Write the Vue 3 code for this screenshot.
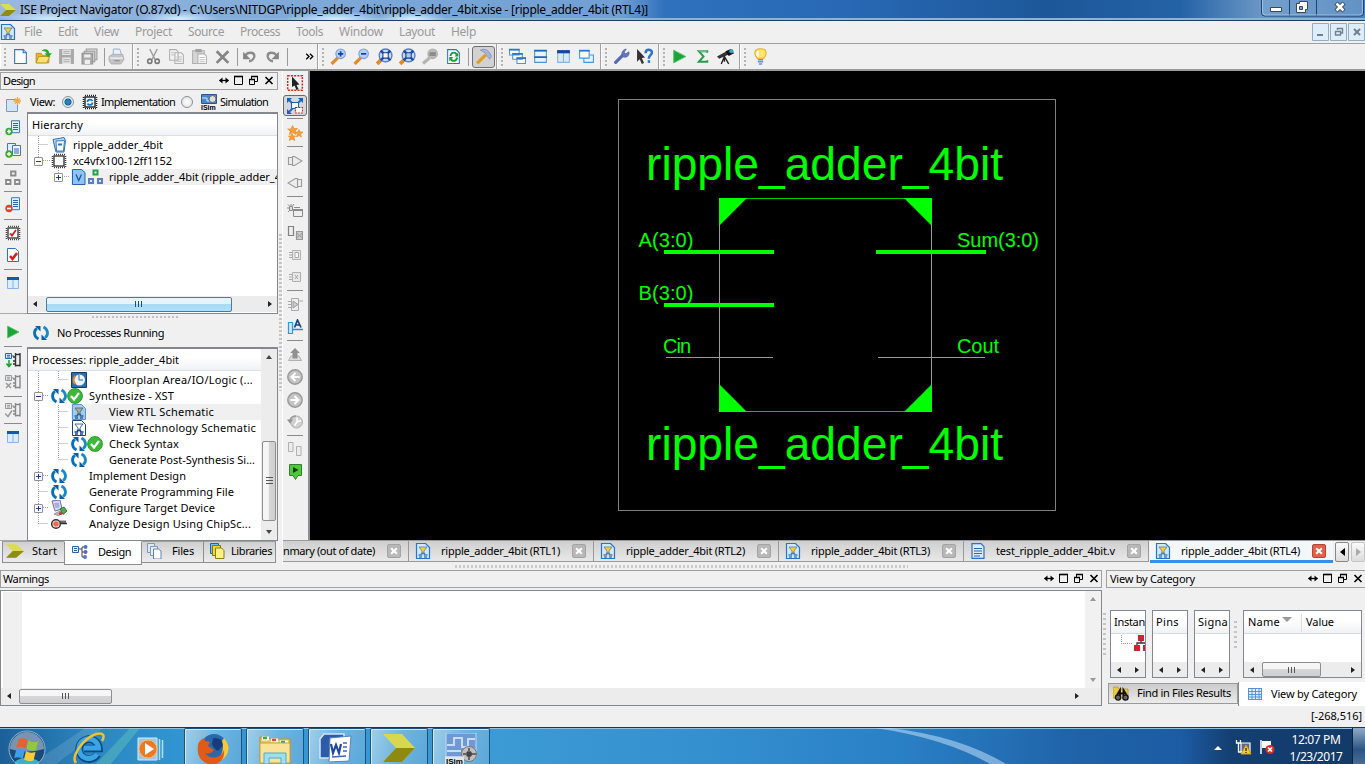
<script setup>
import { h } from 'vue'

// Sets tracking so a label occupies the given width in pixels
const vFit = {
  mounted(el, b) {
    if (!b.value) return
    const w = el.getBoundingClientRect().width
    el.style.letterSpacing = (b.value - w) / el.textContent.length + 'px'
  }
}

const page = '<path d="M2.5 1.5h8l3 3v10h-11z" fill="#fff" stroke="#2f6fc4"/>'
const cycle = '<path d="M5.500 14C.5 11.500 .5 5.500 4 3.500" fill="none" stroke="#0a6fb4" stroke-width="2.800"/><path d="M2 1h5.500v5.500z" fill="#0a5fa4"/><path d="M10.500 2C15.500 4.500 15.500 10.500 12 12.500" fill="none" stroke="#1a88c8" stroke-width="2.800"/><path d="M14 15H8.500V9.500z" fill="#0a5fa4"/>'
const lens = (inner) => `<path d="M1.500 15l6-6" stroke="#e08a28" stroke-width="3"/><circle cx="10" cy="5.500" r="4.500" fill="#b4d0f8" stroke="#7a9ee0"/>${inner}`
const fitLens = (inner) => `<path d="M1 15l4-4" stroke="#e08a28" stroke-width="3.500"/><circle cx="9" cy="7" r="6" fill="#c4dcfa" stroke="#5a7cc8" stroke-width="1.300"/>${inner}`
const chip = (c, f = '#fff') => `<rect x="3" y="3" width="10" height="10" fill="${f}" stroke="${c}" stroke-width="1.400"/><path d="M3 1.500h11M3 14.500h11M1.500 3v11M14.500 3v11" stroke="${c}" stroke-width="1.600" stroke-dasharray="1 1"/>`
const hourglass = (a, b) => `<path d="M4 4h8L9 8v2H7V8z" fill="${a}" stroke="${b}" stroke-width=".8"/><path d="M3.500 12h3v-1.500h3V12h3M4 14h3M9 14h3" fill="none" stroke="${b}" stroke-width="1.300"/>`
const nodeChip = (c, d) => `<path d="M.5 1.500h6v5h-6z" fill="#dde8f4" stroke="${c}"/><path d="M2 3.300h3M2 5h3M6.500 4H9" stroke="${c}"/><path d="M10.500 1v13.500M15 1v13.500M10.500 2.500H15M10.500 13.500H15" stroke="${d}" stroke-width="1.400"/><path d="M8 5h2M8 9h2M8 12h2" stroke="${d}" stroke-width="1.300"/>`
const docLines = '<path d="M6.500 .7h8v12h-8z" fill="#e4eefa" stroke="#3a78c8"/><path d="M8 3.500h5M8 5.500h5M8 7.500h5M8 9.500h5" stroke="#2a62b4"/>'

const art = {
  app: '<path d="M0 2h9l7 6-7 6H0l6-6z" fill="#dcdc50"/><path d="M6 8h10l-7 6H0z" fill="#8f8c14"/>',
  newf: page + '<path d="M10.500 1.500v3h3" fill="#a9d0f6" stroke="#2f6fc4"/>',
  open: '<path d="M1 5h5l1 2h6v7H1z" fill="#e8b62c" stroke="#b88410" stroke-width=".7"/><path d="M3.500 8H14l-3 6H1z" fill="#ffe070" stroke="#b88410" stroke-width=".7"/><path d="M6 3c3-3 7-2 7.500 2H16l-3.500 4L9 5h2C10.500 3.500 9 2.500 6 3z" fill="#28ac30"/>',
  save: '<path d="M1 1h14v14H1z" fill="#a8a8a8"/><path d="M4 1.500h8v5H4zM4 9h8v6H4z" fill="#e8e8e8"/><path d="M5 3h6M5 5h6M5 11h6M5 13h6" stroke="#a8a8a8"/>',
  saveall: '<path d="M5 1h10v10H5z" fill="#ddd" stroke="#999"/><path d="M3 3h10v10H3z" fill="#ddd" stroke="#999"/><path d="M1 5h10v10H1z" fill="#aaa" stroke="#909090"/><path d="M3 6h6v3H3zM3.500 11h5v4h-5z" fill="#eee"/>',
  print: '<path d="M5 7L5 1h6l2 6z" fill="#e8f2fc" stroke="#90a4bc" stroke-width=".8"/><path d="M1 8l3-2h10l1 5-3 4H3L1 12z" fill="#c4c4c8" stroke="#aaa" stroke-width=".8"/><path d="M2 9.500h12" stroke="#fff"/><path d="M6 12h5" stroke="#888"/>',
  cut: '<path d="M4.500 1l5 10M11.500 1l-5 10" stroke="#999" stroke-width="1.300"/><circle cx="4.500" cy="12.500" r="2" fill="none" stroke="#777" stroke-width="1.500"/><circle cx="11.500" cy="12.500" r="2" fill="none" stroke="#777" stroke-width="1.500"/>',
  copy: '<path d="M1.500 1.500h6l2 2v8h-8zM6.500 4.500h6l2 2v8h-8z" fill="#f2f2f2" stroke="#b0b0b0"/><path d="M8 8.500h5M8 10.500h5M8 12.500h5M3 4.500h3M3 6.500h3" stroke="#c0c0c0"/>',
  paste: '<path d="M1.500 2.500h11v12h-11z" fill="#d5d5d5" stroke="#b0b0b0"/><path d="M4 1h6v3H4z" fill="#a0a0a0"/><path d="M6.500 5.500h6l2 2v7h-8z" fill="#f8f8f8" stroke="#b0b0b0"/><path d="M8 9h5M8 11h5M8 13h5" stroke="#c4c4c4"/>',
  del: '<path d="M2.500 3l11 11M13.500 3l-11 11" stroke="#858585" stroke-width="2.600"/>',
  undo: '<path d="M4 7c3-4 9-3 8.500 1-.5 3-3 4.500-5 4.500" fill="none" stroke="#8b8b8b" stroke-width="2.200"/><path d="M2 3.500v7h7z" fill="#858585"/>',
  redo: '<path d="M12 7c-3-4-9-3-8.500 1 .5 3 3 4.500 5 4.500" fill="none" stroke="#8b8b8b" stroke-width="2.200"/><path d="M14 3.500v7H7z" fill="#858585"/>',
  more: '<path d="M4.500 5l3 3-3 3M8.500 5l3 3-3 3" fill="none" stroke="#000" stroke-width="1.400"/>',
  zin: lens('<path d="M7.500 5.500h5M10 3v5" stroke="#1c3ca0" stroke-width="1.500"/>'),
  zout: lens('<path d="M7.500 5.500h5" stroke="#1c3ca0" stroke-width="1.600"/>'),
  zfit: fitLens('<path d="M4.500 2.500l9 9M13.500 2.500l-9 9" stroke="#1c4aa8" stroke-width="2.200"/><path d="M6.500 4.500h5v5h-5z" fill="#fff" stroke="#1c3c90"/>'),
  zbox: fitLens('<path d="M4.500 2.500l9 9M13.500 2.500l-9 9" stroke="#1c4aa8" stroke-width="2.200"/><path d="M6.500 4.500h5v5h-5z" fill="#a8ccf4" stroke="#1c3c90"/>'),
  zgray: '<path d="M1 14.500l6-5" stroke="#b4b4b4" stroke-width="3"/><circle cx="10" cy="5.500" r="4.500" fill="#bbb" stroke="#b0b0b0"/><path d="M7 4h6v3.500H7z" fill="#8a8a8a"/>',
  refresh: page + '<path d="M5 7.500c1-4 5-4 6-1M11.500 9c-1 4-5 4-6 1" fill="none" stroke="#1ea030" stroke-width="1.800"/><path d="M12.500 4v4H9zM4 12.500v-4h4z" fill="#1ea030"/>',
  hammer: '<path d="M2 14.500L10 6.500" stroke="#e0a01c" stroke-width="3"/><path d="M5 2c5-2 7.500 0 10.500 5.500l-1.500 3-2.500-2.500-2-3.500C8 3.500 7 3 5 2z" fill="#a8b4dc" stroke="#8088b8" stroke-width=".7"/>',
  cascade: '<g fill="#fff" stroke="#4a94d8"><path d="M.5 1.500h9v5h-9zM3.500 5.500h9v5h-9zM7.500 9.500h8v5h-8z"/></g><path d="M0 1.500h10M3 5.500h10M7 9.500h9" stroke="#2a78cc" stroke-width="1.500"/>',
  tileh: '<path d="M2.500 2.500h11v11h-11z" fill="#e8f2fc" stroke="#4a94d8"/><path d="M2 2.500h12M2 8.500h12" stroke="#1868c0" stroke-width="1.600"/>',
  tilev: '<path d="M2.500 2.500h11v11h-11zM8 3v10" fill="#d7e8fa" stroke="#8ab4e0"/><path d="M2 3.500h12" stroke="#104898" stroke-width="3"/>',
  layers: '<path d="M5.500 6.500h9v7h-9z" fill="#e6f0fb" stroke="#4a94d8"/><path d="M1.500 2.500h9v7h-9z" fill="#f4f9ff" stroke="#4a94d8"/><path d="M1 2.500h10" stroke="#2a78cc" stroke-width="1.600"/>',
  wrench: '<path d="M2.500 13.500l7-7" stroke="#5868b8" stroke-width="3" stroke-linecap="round"/><path d="M12.500 1l-2 3 1.500 1.500 3-2c1 4-3 6.500-6 4.500-2-3 .5-7 3.500-7z" fill="#6474bc" stroke="#5060a8" stroke-width=".6"/>',
  help: '<path d="M1 1l7.500 8-3 .5 2 4.500-2 1-2-4.500L1 13z" fill="#333"/><path d="M9 5c0-4.500 6-4 6-1 0 3-3 2.500-3 6" fill="none" stroke="#2a72cc" stroke-width="2.300"/><path d="M11 11.500h2.300v2.500H11z" fill="#2a72cc"/>',
  play: '<path d="M2.500 2L14 8 2.500 14z" fill="#19a637" stroke="#5cc06c" stroke-width=".8"/>',
  sigma: '<path d="M12.500 4.500V3h-8L9 8l-4.500 5h8v-1.500" fill="none" stroke="#2a9a4c" stroke-width="1.800"/><path d="M5 3h7" stroke="#a0e0b0" stroke-width=".7"/>',
  scope: '<path d="M0 8l9-5 2 3-9 4z" fill="#333"/><path d="M8 3l5-2 3 4-5 2.500z" fill="#111"/><circle cx="13.500" cy="3" r="2" fill="#38a4c8"/><path d="M7 8l-3 7M7 8l4 7M7 7v6" stroke="#222" stroke-width="1.300"/>',
  bulb: '<path d="M8 .7c7 0 6 6 3 9H5C2 6.500 1 .7 8 .7z" fill="#ffe468" stroke="#e0b020"/><path d="M6 3c-1.500 2-1 4 0 5" stroke="#fff" stroke-width="2" fill="none"/><path d="M5.500 11h5M5.500 13h5M6.500 15h3" stroke="#5898dc" stroke-width="1.500"/>',
  newsrc: '<path d="M1.500 2.500h11v12h-11z" fill="#d3e6f8" stroke="#6c9cd0"/><path d="M12.500 0v8M8.500 4h8M10 1.500l5 5M15 1.500l-5 5" stroke="#f0a848" stroke-width="1.300"/>',
  addsrc: docLines + '<circle cx="4" cy="11.500" r="3.700" fill="#39a93c"/><path d="M4 9.500v4M2 11.500h4" stroke="#fff" stroke-width="1.400"/>',
  addcopy: '<path d="M2.500 1.500h8v9h-8z" fill="#e4eefa" stroke="#3a78c8"/><path d="M7.500 3.500h8v10h-8z" fill="#f4f8fe" stroke="#3a78c8"/><path d="M9 7h5M9 9h5M9 11h5" stroke="#2a62b4"/><circle cx="4" cy="12" r="3.700" fill="#39a93c"/><path d="M4 10v4M2 12h4" stroke="#fff" stroke-width="1.400"/>',
  modsg: '<g fill="#f4f4f4" stroke="#8a8a8a" stroke-width="1.800"><path d="M6 1.500h4.500v4H6zM1 10h4.500v4H1zM10 10h4.500v4H10z"/></g>',
  rmsrc: docLines + '<circle cx="4" cy="11.500" r="3.700" fill="#e04428"/><path d="M2 11.500h4" stroke="#fff" stroke-width="1.600"/>',
  chipchk: chip('#444') + '<path d="M5 8.500l2 2 4-5.500" stroke="#e02020" stroke-width="1.800" fill="none"/>',
  pagechk: page + '<path d="M5 9l2.500 3L12 6" stroke="#e01818" stroke-width="2.500" fill="none"/>',
  cols: '<path d="M2.500 2.500h11v11h-11zM8 3v10" fill="#dcecfa" stroke="#86b4e4"/><path d="M2 3.500h12" stroke="#1058b0" stroke-width="3"/>',
  nodes: nodeChip('#2a62b4', '#333') + '<path d="M4 8v6M1.500 11.500L4 14.500l2.500-3" stroke="#18a030" stroke-width="1.500" fill="none"/>',
  nodesx: nodeChip('#999', '#888') + '<path d="M1 9l5 5M6 9l-5 5" stroke="#999" stroke-width="1.500"/>',
  nodesc: nodeChip('#999', '#888') + '<path d="M0 11.500l3 3 4-6" stroke="#999" stroke-width="1.500" fill="none"/>',
  impl: chip('#222') + '<path d="M5.500 8c0-3 4-3 5-1M10.500 8.500c0 3-4 3-5 1" stroke="#1478c8" stroke-width="1.800" fill="none"/>',
  proj: '<path d="M2 2.500l11-2 1.500 3L13 15H5z" fill="#b7d8f4" stroke="#2c6cae"/><path d="M5 4l8.500-.5L12.500 14H5.500z" fill="#f3f9ff" stroke="#3c7cc0"/><path d="M7 6.500h4v2H7z" fill="#2c74c8"/>',
  chip: chip('#3c3c3c'),
  vfile: '<path d="M1.500 .5h9l3.500 3v12H1.500z" fill="#8fc3f2" stroke="#2464b0"/><path d="M5 5.500l2.700 6 2.700-6" fill="none" stroke="#1b4f9c" stroke-width="1.200"/>',
  mods: '<path d="M6.500 1.500h4v4h-4z" fill="#d8f4e0" stroke="#25a050" stroke-width="2"/><g fill="#e0e8fa" stroke="#5c7cc8" stroke-width="2"><path d="M2 10h4v4H2zM11 10h4v4h-4z"/></g>',
  cycle,
  ok: '<circle cx="8" cy="8" r="7.400" fill="#3cb93a" stroke="#2a9a2c"/><path d="M4 8l3 3.500L12 5" fill="none" stroke="#fff" stroke-width="2.200"/>',
  floor: '<path d="M.5 .5h15v15H.5z" fill="#2c6cb4" stroke="#123c70"/><circle cx="8.500" cy="8" r="5.500" fill="#eaf4fc"/><path d="M8 3v5h4" stroke="#2c6cb4" fill="none"/><path d="M4.500 12a5 5 0 0 1 0-8" stroke="#e88a1c" stroke-width="2" fill="none"/>',
  rtl: '<path d="M1.500 .5h9l4 4v11h-13z" fill="#a4caf0" stroke="#5a94d0"/>' + hourglass('#b0ac80', '#37648c'),
  tech: '<path d="M1.500 .5h9l4 4v11h-13z" fill="#fff" stroke="#16458c"/>' + hourglass('#fff', '#16458c'),
  sch: '<path d="M1.500 .5h9l4 4v11h-13z" fill="#d3e7fb" stroke="#2a74c8" stroke-width="1.200"/>' + hourglass('#fcd024', '#5080b8'),
  config: '<path d="M1 1l8-1 2 9-7 2z" fill="#d8dcf0" stroke="#6c7098"/><path d="M3 3l5-.5.500 5-4 .5z" fill="#a8b0d8"/><path d="M3 14l6-3 2 3-4 1.500z" fill="#b8b8c8" stroke="#888" stroke-width=".8"/><path d="M9 9l4-2 3 4-4 3.500z" fill="#4cae50" stroke="#205c28" stroke-width=".8"/><circle cx="9.500" cy="13.500" r="1.600" fill="#d83030"/>',
  scopekey: '<path d="M8.500 7.500H16M10 4.500v3M12 4.500v3M14 4.500v3" stroke="#333" stroke-width="1.400"/><circle cx="5" cy="8" r="4.300" fill="#fff" stroke="#333" stroke-width="1.500"/><circle cx="5" cy="8" r="2.800" fill="#f0684c"/>',
  select: '<path d="M.7 .7h14.600v14.600H.7z" fill="none" stroke="#e02020" stroke-width="1.400" stroke-dasharray="2 1.200"/><path d="M5 1.500l7.500 8-3 .5 2 4-2 1-2-4.500L5 12z" fill="#222"/>',
  zoomfull: '<path d="M2 2l12 12M14 2L2 14" stroke="#2468b8" stroke-width="1.800"/><path d="M0 0h5L0 5zM16 0h-5l5 5zM0 16h5l-5-5z" fill="#1c60b4"/><path d="M4.500 4.500h7v6h-7z" fill="#fff" stroke="#1c60b4"/><path d="M8.500 9.500h7v5.500h-7z" fill="#fff" stroke="#e02020" stroke-width="1.200" stroke-dasharray="2 1"/>',
  stars: '<g fill="#f4a03c" stroke="#ee8c24" stroke-width=".7"><path d="M5.500 .5L7 3.500h3.500L8 6l1 3.500-3.500-2-3 2 .7-3.500-2.500-2H4z"/><path d="M12 4.500l1 2.500h3L13.500 9l1 3-2.500-1.500-2.500 1.500 1-3L8 7h3z"/><path d="M5 8.500l1 2.500h2.500L7 12.500l.7 3L5 14l-2.500 1.500.5-3L1.500 11H4z"/></g>',
  gateR: '<path d="M1.500 4.500h4v7h-4zM5.500 3.500h2L15 8l-7.500 4.500h-2z" fill="#ececec" stroke="#9a9a9a" stroke-width="1.100"/>',
  gateL: '<path d="M14.500 4.500h-4v7h4zM10.500 3.500h-2L1 8l7.500 4.500h2z" fill="#ececec" stroke="#9a9a9a" stroke-width="1.100"/>',
  win: '<path d="M6.500 6.500h9v7h-9z" fill="#eee" stroke="#8a8a8a"/><path d="M6 7h10" stroke="#8a8a8a" stroke-width="2"/><path d="M2.500 3.500h3v4h-3z" fill="#ddd" stroke="#8a8a8a"/><path d="M7 4.500h6M1 1.500l1.500 1.500M4 1v2M7 1L5.500 3M0 5h2M1 9l1.500-1.500" fill="none" stroke="#8a8a8a"/>',
  boxes: '<path d="M1.500 1.500h5v9h-5z" fill="#eee" stroke="#808080" stroke-width="1.200"/><path d="M9.500 6.500h6v8h-6z" fill="#ccc" stroke="#999" stroke-width="1.200"/><path d="M9.500 8l6 5M15.500 8l-6 5" stroke="#999"/>',
  chipg: '<path d="M5.500 3.500h8v9h-8z" fill="#e8e8e8" stroke="#b0b0b0"/><path d="M8 5.500h3.500v5H8zM2 5.500h3M2 8h3M2 10.500h3" fill="#fff" stroke="#a8a8a8"/>',
  chipg2: '<path d="M5.500 3.500h8v9h-8z" fill="#e8e8e8" stroke="#b0b0b0"/><path d="M8 6l3 4M11 6l-3 4M2 5.500h3M2 8h3M2 10.500h3" stroke="#a8a8a8"/>',
  amp: '<path d="M4.500 1.500h7v12h-7zM1 4.500h3M1 7.500h3M1 10.500h3M12 4h4" fill="#eee" stroke="#a8a8a8"/><path d="M6 4l5 3.500L6 11z" fill="#ccc" stroke="#999"/>',
  attr: '<path d="M1.500 3.500h4v11h-4z" fill="#d4e8fc" stroke="#2a98e8" stroke-width="1.200"/><path d="M5 10.500h11" stroke="#2a88d8" stroke-width="1.500"/><path d="M7.500 8.500L10.500 1l3.500 7.500M8.500 6h4" fill="none" stroke="#20408c" stroke-width="1.700"/>',
  upg: '<path d="M1.500 13.500L4 9h8l2.500 4.500z" fill="#ddd" stroke="#b0b0b0"/><path d="M5.500 11.500V6H3l5-5 5 5h-2.500v5.500z" fill="#909090"/>',
  back: '<circle cx="8" cy="8" r="7.200" fill="#c4c4c4" stroke="#989898" stroke-width="1.400"/><path d="M8.500 4L4.500 8l4 4M5 8h7.500" fill="none" stroke="#fff" stroke-width="2"/>',
  fwd: '<circle cx="8" cy="8" r="7.200" fill="#c4c4c4" stroke="#989898" stroke-width="1.400"/><path d="M7.500 4l4 4-4 4M11 8H3.500" fill="none" stroke="#fff" stroke-width="2"/>',
  clock: '<circle cx="9.500" cy="8" r="6" fill="#d0d0d0" stroke="#b0b0b0"/><path d="M10 3.500V8l4-1.500M7.500 11.500L10 8" stroke="#fff" stroke-width="1.500" fill="none"/><path d="M0 5.500h6L3 9.500z" fill="#909090"/><path d="M3 6c1-3 4-4 6-4" fill="none" stroke="#999" stroke-width="1.500"/>',
  pair: '<path d="M1.500 1.500H6v9H1.500zM9.500 5.500H14v9H9.500z" fill="#ececec" stroke="#b0b0b0"/>',
  gflag: '<path d="M2.500 .5h12v11h-3.500l-2.500 4-2.500-4h-3.500z" fill="#4cc83a" stroke="#3a7c34"/><path d="M6 3l5.500 3L6 9z" fill="#163c12"/>',
  designt: '<path d="M.5 2.500h6v6h-6z" fill="#e4eefa" stroke="#2a62b4"/><path d="M2 4.500h3M2 6.500h3" stroke="#2a62b4"/><path d="M7 5h3M10 3v10M10 3h2M10 8h2M10 13h2" stroke="#444" fill="none"/><circle cx="13.500" cy="3" r="2" fill="#3a78c8"/><circle cx="13.500" cy="8" r="2" fill="#6c5cb8"/><circle cx="13" cy="13" r="2" fill="#5c78c8"/>',
  filest: '<path d="M1.500 .5h7v9h-7z" fill="#dce8f6" stroke="#7c98c0"/><path d="M4.500 3.500h7v9h-7z" fill="#e8f0fa" stroke="#7c98c0"/><path d="M7.500 6h5l2.500 2v8H7.500z" fill="#fff" stroke="#6484b0"/>',
  libst: '<path d="M1.500 .5h8v10h-8z" fill="#78c0ec" stroke="#1868a8"/><path d="M3.500 2.500h8v10h-8z" fill="#f8d820" stroke="#7c7420"/><path d="M6.500 5h6l2.500 2.500v8H6.500z" fill="#fff080" stroke="#8c7c10"/>',
  doc: '<path d="M2 .7h9l3 3v11.600H2z" fill="#dceafa" stroke="#2c70c4" stroke-width="1.200"/><path d="M4 5.500h8M4 8h8M4 10.500h8M4 13h6" stroke="#2868c0" stroke-width="1.200"/>',
  find: '<path d="M0 2h5l1 2h9v9H0z" fill="#ecc83c" stroke="#b89428" stroke-width=".8"/><circle cx="5" cy="12.500" r="2.600" fill="#666" stroke="#111" stroke-width="1.300"/><circle cx="12.500" cy="12.500" r="2.600" fill="#666" stroke="#111" stroke-width="1.300"/><path d="M4 10l3-5v6M13.500 10l-3-5v6M7 8.500h3.500" stroke="#111" stroke-width="1.800" fill="none"/>',
  grid: '<path d="M1 2h14v12H1z" fill="#e6f0fc"/><path d="M1 2.500h14M1 5.500h14M1 8.500h14M1 11h14M1 13.500h14M1.500 2v12M5 2v12M8.500 2v12M12 2v12M14.500 2v12" stroke="#5c90d4"/>',
  inst: '<path d="M4 0h6v6H4zM0 10h6v6H0zM9 10h6v6H9z" fill="#d42030"/><path d="M7 5.500V8M3 10V8h9v2" fill="none" stroke="#333" stroke-width="1.300"/>'
}

const Ico = (p) => h('svg', { width: p.s || 16, height: p.s || 16, viewBox: '0 0 16 16', class: 'ico', innerHTML: art[p.n] })
Ico.props = ['n', 's']

const Dock = () => h('svg', {
  width: 58, height: 13, viewBox: '0 0 58 13', class: 'dock',
  innerHTML: '<path d="M1.500 6.500h9" stroke="#000" stroke-width="1.300"/><path d="M4.500 3.500v6l-3.500-3zM7.500 3.500v6l3.500-3z"/><path d="M16.500 2.500h8v8h-8z" fill="none" stroke="#000"/><path d="M16 2.500h9" stroke="#000" stroke-width="1.600"/><path d="M33.500 5V2.500h6v5H37M31.500 5.500h5v5h-5z" fill="none" stroke="#000" stroke-width="1"/><path d="M33 2.500h7M31 5.500h6" stroke="#000" stroke-width="1.600"/><path d="M47.500 3l7 7M54.500 3l-7 7" stroke="#000" stroke-width="1.600"/>'
})

const menus = [['File', 18], ['Edit', 20], ['View', 25], ['Project', 37], ['Source', 36], ['Process', 40], ['Tools', 27], ['Window', 44], ['Layout', 36], ['Help', 25]]
const groups = [
  { k: 'g1', i: ['newf', 'open', 'save', 'saveall', '|', 'print'] },
  { k: 'g2', i: ['cut', 'copy', 'paste', 'del', '|', 'undo', 'redo', '|', ' ', 'more'] },
  { k: 'g3', i: ['zin', 'zout', 'zfit', 'zbox', 'zgray', 'refresh', '|', 'hammer'] },
  { k: 'g4', i: ['cascade', 'tileh', 'tilev', 'layers'] },
  { k: 'g5', i: ['wrench', 'help'] },
  { k: 'g6', i: ['play', 'sigma', 'scope'] },
  { k: 'g7', i: ['bulb'] }
]
const left1 = ['newsrc', 'addsrc', 'addcopy', '|', 'modsg', '|', 'rmsrc', '|', 'chipchk', 'pagechk', '|', 'cols']
const left2 = ['play', '|', 'nodes', 'nodesx', '|', 'nodesc', '|', 'cols']
const rtb = ['select', 'zoomfull', '|', 'stars', '|', 'gateR', 'gateL', '|', 'win', 'boxes', 'chipg', 'chipg2', '|', 'amp', 'attr', '|', 'upg', 'back', 'fwd', 'clock', '|', 'pair', 'gflag']
const hier = [
  { i: ['proj'], t: 'ripple_adder_4bit', w: 90 },
  { e: '-', i: ['chip'], t: 'xc4vfx100-12ff1152', w: 99 },
  { e: '+', l: 1, wide: 1, hl: 1, i: ['vfile', 'mods'], t: 'ripple_adder_4bit (ripple_adder_4', w: 172 }
]
const procs = [
  { l: 1, i: ['floor'], t: 'Floorplan Area/IO/Logic (...', w: 144 },
  { e: '-', i: ['cycle', 'ok'], t: 'Synthesize - XST', w: 85 },
  { l: 1, hl: 1, i: ['rtl'], t: 'View RTL Schematic', w: 105 },
  { l: 1, i: ['tech'], t: 'View Technology Schematic', w: 147 },
  { l: 1, i: ['cycle', 'ok'], t: 'Check Syntax', w: 70 },
  { l: 1, i: ['cycle'], t: 'Generate Post-Synthesis Si...', w: 146 },
  { e: '+', i: ['cycle'], t: 'Implement Design', w: 97 },
  { i: ['cycle'], t: 'Generate Programming File', w: 145 },
  { e: '+', i: ['config'], t: 'Configure Target Device', w: 126 },
  { i: ['scopekey'], t: 'Analyze Design Using ChipSc...', w: 162 }
]
const docs = [
  { i: 'sch', t: 'ripple_adder_4bit (RTL1)', w: 119 },
  { i: 'sch', t: 'ripple_adder_4bit (RTL2)', w: 119 },
  { i: 'sch', t: 'ripple_adder_4bit (RTL3)', w: 119 },
  { i: 'doc', t: 'test_ripple_adder_4bit.v', w: 119 },
  { i: 'sch', t: 'ripple_adder_4bit (RTL4)', w: 119, on: 1 }
]
const lists = [['Instan', 31, 1], ['Pins', 23, 0], ['Signa', 30, 0]]
</script>

<template>
  <div class="screen">
    <header class="title">
      <Ico n="app" class="applogo" /><span v-fit="628">ISE Project Navigator (O.87xd) - C:\Users\NITDGP\ripple_adder_4bit\ripple_adder_4bit.xise - [ripple_adder_4bit (RTL4)]</span>
      <svg class="winbtns" width="103" height="17" viewBox="0 0 103 17">
        <path d="M.5 0v13q0 3 3 3h96q3 0 3-3V0M28.500 0v16M55.500 0v16" fill="#7fa9d4" fill-opacity=".45" stroke="#1e4474" />
        <path d="M1.500 0v12q0 3 3 3h94q3 0 3-3V0" fill="none" stroke="#b6d0ea" stroke-opacity=".7" />
        <path d="M9.500 7.500h11v4h-11z" fill="#fff" stroke="#39485a" />
        <path d="M38.500 1.500h8v8h-2v3h-9v-9h3z" fill="#fff" stroke="#39485a" /><path d="M38.500 6.500h3v3h-3z" fill="#7fa9d4" stroke="#39485a" />
        <path d="M75 3l8 8M83 3l-8 8" stroke="#39485a" stroke-width="4.500" /><path d="M75.500 3.500l7 7M82.500 3.500l-7 7" stroke="#fff" stroke-width="2.500" />
      </svg>
    </header>

    <nav class="menu">
      <Ico n="sch" class="mlogo" />
      <span v-for="m in menus" :key="m[0]" v-fit="m[1]">{{ m[0] }}</span>
      <svg class="mdi" width="53" height="19" viewBox="0 0 53 19">
        <path d="M.5 .5h16v17H.5zM18.500 .5h16v17h-16zM36.500 .5h16v17h-16z" fill="#dfecf9" stroke="#92acc4" />
        <path d="M5 12h6" stroke="#70808e" stroke-width="2" />
        <path d="M25.500 7V5.500h5V10H29M23.500 8.500h5v3.500h-5z" fill="none" stroke="#70808e" stroke-width="1.400" />
        <path d="M42 6l6 6M48 6l-6 6" stroke="#70808e" stroke-width="2" />
      </svg>
    </nav>

    <div class="tools">
      <div v-for="g in groups" :key="g.k" class="tgroup" :class="g.k">
        <template v-for="(n, i) in g.i" :key="i">
          <i v-if="n === '|'" class="vsep"></i>
          <i v-else-if="n === ' '" class="gapx"></i>
          <span v-else class="slot" :class="{ pressed: n === 'hammer' }"><Ico :n="n" :s="n === 'more' ? 15 : 17" /></span>
        </template>
      </div>
    </div>

    <main class="work">
      <aside class="side">
        <div class="dockhead"><span v-fit="32">Design</span><Dock /></div>
        <div class="upper">
          <div class="vtool">
            <template v-for="(n, i) in left1" :key="i"><i v-if="n === '|'" class="hsep"></i><span v-else class="vslot"><Ico :n="n" /></span></template>
          </div>
          <div class="pane">
            <div class="viewrow">
              <span v-fit="25">View:</span><i class="radio on"></i><Ico n="impl" /><span v-fit="74" class="lab">Implementation</span><i class="radio r2"></i>
              <svg width="16" height="16" viewBox="0 0 16 16"><path d="M.5 .5h15v9H.5z" fill="#4888cc" stroke="#28589c" /><path d="M1 4h5v3h4V3h5" stroke="#d8ecff" fill="none" /><circle cx="11.500" cy="5" r="3.500" fill="#ddd" stroke="#666" /><text x="0" y="15.500" class="isim">ISim</text></svg>
              <span v-fit="48" class="lab">Simulation</span>
            </div>
            <div class="box hbox">
              <div class="colhead"><span v-fit="51">Hierarchy</span></div>
              <div class="tree">
                <svg class="lines" width="60" height="60" viewBox="0 0 60 60"><path d="M10.500 0v24M10.500 8.500h10M15 24.500h7M30.500 32v8M36 40.500h6" /></svg>
                <div v-for="r in hier" :key="r.t" class="row" :class="{ deep: r.l }">
                  <i class="exp" :class="{ none: !r.e, plus: r.e === '+' }"></i>
                  <div class="fill" :class="{ hl: r.hl }"><div class="icons" :class="{ slim: !r.wide }"><Ico v-for="n in r.i" :key="n" :n="n" /></div><span v-fit="r.w">{{ r.t }}</span></div>
                </div>
              </div>
              <div class="hscroll"><b class="al"></b><i class="thumb blue"></i><b class="ar"></b></div>
            </div>
          </div>
        </div>
        <div class="splith"><i></i></div>
        <div class="lower">
          <div class="vtool">
            <template v-for="(n, i) in left2" :key="i"><i v-if="n === '|'" class="hsep"></i><span v-else class="vslot"><Ico :n="n" /></span></template>
          </div>
          <div class="pane">
            <div class="running"><Ico n="cycle" /><span v-fit="107">No Processes Running</span></div>
            <div class="box pbox">
              <div class="plist">
                <div class="colhead"><span v-fit="147">Processes: ripple_adder_4bit</span></div>
                <div class="tree">
                  <svg class="lines" width="60" height="162" viewBox="0 0 60 162"><path d="M10.500 0v154M30.500 0v8M30.500 34v54M30.500 8.500h10M30.500 40.500h10M30.500 56.500h10M30.500 72.500h10M30.500 88.500h10M15 24.500h6M15 104.500h6M10.500 120.500h10M15 136.500h6M10.500 152.500h10" /></svg>
                  <div v-for="r in procs" :key="r.t" class="row" :class="{ deep: r.l }">
                    <i class="exp" :class="{ none: !r.e, plus: r.e === '+' }"></i>
                    <div class="fill" :class="{ hl: r.hl }"><div class="icons"><Ico v-for="n in r.i" :key="n" :n="n" /></div><span v-fit="r.w">{{ r.t }}</span></div>
                  </div>
                </div>
              </div>
              <div class="vscroll"><b class="au"></b><i class="vthumb"></i><b class="ad"></b></div>
            </div>
          </div>
        </div>
        <div class="sidetabs">
          <div class="st t1"><Ico n="app" :s="18" /><span v-fit="25">Start</span></div>
          <div class="st t2"><Ico n="designt" /><span v-fit="33">Design</span></div>
          <div class="st t3"><Ico n="filest" /><span v-fit="22">Files</span></div>
          <div class="st t4"><Ico n="libst" /><span v-fit="41">Libraries</span></div>
        </div>
      </aside>
      <div class="splitv"><i></i></div>

      <section class="center">
        <div class="editor">
          <div class="rtool">
            <template v-for="(n, i) in rtb" :key="i"><i v-if="n === '|'" class="hsep"></i><span v-else class="vslot" :class="{ pressed: n === 'zoomfull' }"><Ico :n="n" /></span></template>
          </div>
          <svg class="canvas" width="1055" height="469" viewBox="310 71 1055 469">
            <g fill="none" stroke="#808080" shape-rendering="crispEdges">
              <path d="M618.500 99.500h437v411h-437z" />
              <path d="M719.500 198v213M931.500 198v213" stroke="#9a9a9a" />
              <path d="M719 198.500h213M719 411.500h213" stroke="#00c800" />
              <path d="M666 357.500h107M878 357.500h107" stroke="#9a9a9a" />
            </g>
            <g fill="#0f0">
              <path d="M719 198h28l-28 28zM932 198h-28l28 28zM719 412h28l-28-28zM932 412h-28l28-28z" />
              <path d="M664 250h110v4H664zM664 303h110v4H664zM876 250h110v4H876z" />
              <text x="646" y="180" textLength="357" class="big">ripple_adder_4bit</text>
              <text x="646" y="460" textLength="357" class="big">ripple_adder_4bit</text>
              <text x="638.500" y="247" textLength="55">A(3:0)</text>
              <text x="638.500" y="300" textLength="55">B(3:0)</text>
              <text x="663" y="353" textLength="28">Cin</text>
              <text x="957" y="247" textLength="82">Sum(3:0)</text>
              <text x="957" y="353" textLength="42">Cout</text>
            </g>
          </svg>
        </div>
        <div class="doctabs">
          <div class="dt first"><span v-fit="92">nmary (out of date)</span><b class="x"></b></div>
          <div v-for="d in docs" :key="d.t" class="dt" :class="{ on: d.on }"><Ico :n="d.i" /><span v-fit="d.w">{{ d.t }}</span><b class="x"></b></div>
          <div class="tb"><b class="al"></b></div><div class="tb off"><b class="ar"></b></div>
        </div>
      </section>
    </main>

    <div class="splitb"><i></i></div>

    <section class="bottom">
      <div class="warn">
        <div class="dockhead"><span v-fit="46">Warnings</span><Dock /></div>
        <div class="wbox">
          <div class="wrow"><i class="strip"></i><div class="vscroll wv"><b class="au"></b><b class="ad"></b></div></div>
          <div class="hscroll"><b class="al"></b><i class="thumb"></i><b class="ar"></b></div>
        </div>
      </div>
      <div class="cat">
        <div class="dockhead"><span v-fit="85">View by Category</span><Dock /></div>
        <div class="lists">
          <i class="vdots"></i>
          <div v-for="l in lists" :key="l[0]" class="lb">
            <div class="lh"><span v-fit="l[1]">{{ l[0] }}</span></div>
            <div class="lbody" :class="{ branch: l[2] }"><Ico v-if="l[2]" n="inst" /></div>
            <div class="hscroll"><b class="al"></b><b class="ar"></b></div>
          </div>
          <i class="vdots d2"></i>
          <div class="lb wide">
            <div class="lh"><span v-fit="32">Name</span><b class="sort"></b><i class="vline"></i><span v-fit="28">Value</span></div>
            <div class="lbody"></div>
            <div class="hscroll"><b class="al"></b><i class="thumb"></i><b class="ar"></b></div>
          </div>
        </div>
        <div class="cattabs">
          <div class="ct"><Ico n="find" /><span v-fit="94">Find in Files Results</span></div>
          <div class="ct on"><Ico n="grid" /><span v-fit="86">View by Category</span></div>
        </div>
      </div>
    </section>

    <div class="status"><span v-fit="51">[-268,516]</span></div>

    <footer class="taskbar">
      <svg class="glow" width="1365" height="37" viewBox="0 0 1365 37">
        <path d="M30 37L85 0h18L55 37z" fill="#fff" opacity=".12" /><path d="M95 37L130 0h10l-30 37z" fill="#8ff0b0" opacity=".25" />
        <path d="M890 0Q960 8 1008 37h-16Q945 10 875 0z" fill="#cfeaff" opacity=".5" />
      </svg>
      <div class="launch l1"><svg width="38" height="37" viewBox="0 0 38 37">
        <circle cx="19" cy="20" r="18" fill="#1b4a76" stroke="#8fb8d8" /><path d="M2 20a17 17 0 0 1 34 0q-17 5-34 0z" fill="#c3d4e0" opacity=".55" /><ellipse cx="19" cy="34" rx="12" ry="5" fill="#48d8f8" opacity=".7" />
        <path d="M11 10q4-2 8.500 1l-2 8.500q-4-3-9-1z" fill="#e8602c" /><path d="M20.500 11.500q4 3 9.500 1l-2 8.500q-4 2-9.500-1z" fill="#94c83c" /><path d="M8.200 20.500q4-2 8.500 1l-2 8.500q-4-3-8.500-1z" fill="#3ca0e8" /><path d="M18 22q4 3 9.500 1l-2 8.500q-4 2-9.500-1z" fill="#f8cc38" />
      </svg></div>
      <div class="launch l2"><svg width="34" height="34" viewBox="0 0 34 34">
        <path d="M25.500 23.500a10 10 0 1 1 1.500-6H12" fill="none" stroke="#0a4a84" stroke-width="7.500" /><path d="M25 23a9.800 9.800 0 1 1 1.500-6H12" fill="none" stroke="#3aa4e4" stroke-width="5" /><path d="M4 32C-1 26 10 8 24 3c8-2 9 2 6 7" fill="none" stroke="#f0c030" stroke-width="2.500" />
      </svg></div>
      <div class="launch l3"><svg width="28" height="28" viewBox="0 0 28 28">
        <path d="M1 2h19v22H1z" fill="#9cc8e4" stroke="#d4ecf8" /><path d="M22.500 3v21M25.500 4v18" stroke="#b4e0f4" stroke-width="1.500" /><circle cx="11" cy="13" r="9" fill="#f07820" stroke="#fcb870" /><path d="M8 7l9 6-9 6z" fill="#fff" />
      </svg></div>
      <div class="task"><svg width="32" height="32" viewBox="0 0 32 32">
        <circle cx="17" cy="14" r="13" fill="#2a68ac" /><path d="M16 5q8-1 11 6l-6 7q-5-3-6-7z" fill="#173c7c" /><path d="M27 5q8 10 2 18-5 6-12 7 12-10 8-22z" fill="#f8c838" /><path d="M2 9l3-3q2-2 3 2l5 1-2 4 6 4q-4 5-9 3 5 6 12 4 5-2 7-7 1 9-6 13c-8 4-18-1-20-10Q0 13 2 9z" fill="#e05a18" />
      </svg></div>
      <div class="task"><svg width="34" height="32" viewBox="0 0 34 32">
        <path d="M2 4h8l2 2h20v24H2z" fill="#e9c55c" stroke="#b8902c" /><path d="M4 3.500h7v4H4zM13 5.500h7v4h-7zM22 7.500h8v3h-8z" fill="#fff" /><path d="M5 5h4" stroke="#30b040" stroke-width="2.500" /><path d="M14 7h4" stroke="#e04838" stroke-width="2.500" /><path d="M23 9h4" stroke="#2898e0" stroke-width="2.500" /><path d="M2 10h30v20H2z" fill="#fae396" stroke="#c8a040" /><path d="M6 31V20h22v11h-5v-6H11v6z" fill="#a2dcf2" stroke="#4cacd4" />
      </svg></div>
      <div class="task"><svg width="38" height="32" viewBox="0 0 38 32">
        <path d="M6 1h20v24H2V6z" fill="#2c5ca8" stroke="#d4e4fa" stroke-width="1.500" /><path d="M12 5l21-2-2 25-20 1z" fill="#fff" stroke="#5884c4" /><path d="M13 11l2 9 3-8 3 8 2-9" fill="none" stroke="#24489c" stroke-width="2.200" /><path d="M25 10h4M25 14h4M25 18h4M14 24l14-1" stroke="#3c68b4" stroke-width="1.500" />
      </svg></div>
      <div class="task"><svg width="32" height="32" viewBox="0 0 32 32"><path d="M0 1h19l13 14-13 14H0l13-14z" fill="#d8d850" /><path d="M13 15h19L19 29H0z" fill="#8e8a10" /></svg></div>
      <div class="task"><svg width="32" height="32" viewBox="0 0 32 32">
        <path d="M1 0h30v24H1z" fill="#7098d4" stroke="#c8d8f0" /><path d="M2 12h7V5h8v9h6V6h7M2 18h14" fill="none" stroke="#c8dcf8" stroke-width="2" /><circle cx="24" cy="21" r="7.500" fill="#c0c0c0" stroke="#777" /><circle cx="24" cy="21" r="3" fill="#444" /><path d="M24 15v4M24 24v3M18 21h4M27 21h4" stroke="#666" stroke-width="2" /><path d="M0 23.500h19v8H0z" fill="#dfe6ee" /><text x="1" y="31" class="isim2">ISim</text>
      </svg></div>
      <div class="tray">
        <b class="trayup"></b>
        <svg width="50" height="18" viewBox="0 0 50 18">
          <path d="M6 4h9v9H6z" fill="#667" stroke="#fff" stroke-width="1.200" /><path d="M1.500 1v3h4V1M3.500 4v9h3" stroke="#fff" fill="none" stroke-width="1.300" /><path d="M11 6l5 9H6z" fill="#f8d020" stroke="#c8a418" /><path d="M11 9v3M11 13v1" stroke="#222" stroke-width="1.300" />
          <path d="M26 1v14" stroke="#fff" stroke-width="1.500" /><path d="M27 2h9v7h-9z" fill="#fff" /><circle cx="35" cy="10.500" r="4.500" fill="#d82c28" /><path d="M33 8.500l4 4M37 8.500l-4 4" stroke="#fff" stroke-width="1.700" />
        </svg>
      </div>
      <div class="clock"><span v-fit="49">12:07 PM</span><span v-fit="53">1/23/2017</span></div>
      <i class="peek"></i>
    </footer>
  </div>
</template>

<style>
html, body { background: #f0f0f0; overflow: hidden; }
</style>
<style scoped>
* { box-sizing: border-box; }
.screen { width: 1365px; height: 764px; overflow: hidden; display: flex; flex-direction: column; background: #f0f0f0; font: 11px/16px "Noto Sans", "Open Sans", sans-serif; color: #000; }
.screen span { white-space: nowrap; flex: none; }
.ico, svg { flex: none; display: block; }
i { font-style: normal; flex: none; }
.title { height: 21px; flex: none; display: flex; align-items: flex-start; justify-content: flex-start; font-size: 12px; line-height: 19px; border-bottom: 1px solid #1d3f63; background: radial-gradient(ellipse 50px 8px at 50px 19px, #d4ecf8, transparent), radial-gradient(ellipse 40px 8px at 180px 19px, #d4f0f8, transparent), radial-gradient(ellipse 50px 8px at 335px 19px, #d4f0f8, transparent), radial-gradient(ellipse 35px 8px at 412px 19px, #d8f4fa, transparent), linear-gradient(to bottom, transparent 18px, #86b4dc 18px), linear-gradient(to right, #9ab8de 0, #7ea9d8 300px, #719fd4 620px, #2f71bc 665px, #2868b4 850px, #1c5799 1050px, #2462a6 1180px, #6b97c6 1262px, #4c80ba 1365px); }
.applogo { margin: 2px 4px 0 0; }
.winbtns { margin: 0 1px 0 auto; }
.menu { height: 23px; flex: none; display: flex; align-items: center; gap: 16px; font-size: 12px; color: #9a9a9a; border-bottom: 1px solid #a0a0a0; }
.mlogo { margin: 0 -8px 0 0; }
.mdi { margin-left: auto; }
.tools { height: 27px; flex: none; display: flex; border-bottom: 2px solid #9a9a9a; }
.tgroup { display: flex; flex: none; align-items: center; padding-left: 9px; border-right: 1px solid #a0a0a0; box-shadow: inset 1px 0 #fff; position: relative; }
.tgroup::before { content: ""; position: absolute; left: 4px; top: 4px; width: 2px; height: 19px; background: repeating-linear-gradient(#b4b4b4 0 2px, transparent 2px 4px); }
.g1 { width: 133px; } .g2 { width: 185px; } .g3 { width: 179px; } .g4 { width: 104px; } .g5 { width: 58px; } .g6 { width: 81px; } .g7.g7 { flex: 1; border: 0; }
.slot { width: 23px; height: 22px; display: flex; align-items: center; justify-content: center; }
.slot.pressed { width: 23px; margin-left: 3px; border: 1px solid #6f6f6f; border-radius: 3px; background: #d2d2d2; }
.vsep { width: 4px; height: 18px; border-right: 1px solid #999; }
.gapx { width: 10px; }
.work { height: 494px; flex: none; display: flex; }
.side { width: 278px; flex: none; display: flex; flex-direction: column; padding-top: 1px; }
.dockhead { height: 18px; flex: none; border: 1px solid #a0a0a0; display: flex; justify-content: space-between; align-items: center; padding: 0 0 0 2px; }
.dock { margin: -1px 1px 0 0; }
.upper { height: 224px; flex: none; display: flex; }
.lower { height: 222px; flex: none; display: flex; }
.vtool { width: 27px; flex: none; display: flex; flex-direction: column; padding: 4px 1px 0 0; border-bottom: 1px solid #a8a8a8; }
.lower .vtool { padding-top: 2px; }
.vslot { height: 22.5px; display: flex; align-items: center; justify-content: center; }
.hsep { height: 5px; display: block; padding-top: 2px; }
.hsep::before { content: ""; display: block; height: 1px; background: #8a8a8a; margin: 0 4px; }
.pane { flex: 1; min-width: 0; display: flex; flex-direction: column; }
.viewrow { height: 22px; flex: none; display: flex; align-items: center; padding: 2px 0 0 3px; }
.radio { width: 12px; height: 12px; border-radius: 50%; border: 1px solid #8a8f96; background: radial-gradient(#fff, #ddd); margin: 0 8px 0 7px; }
.radio.on { background: radial-gradient(circle, #2080c0 0 2.500px, #174874 3px, #e0f0fa 4px); }
.radio.r2 { margin: 0 8px 0 6px; }
.lab { margin-left: 3px; }
.isim { font: bold 7px "Liberation Sans", sans-serif; }
.box { border: 1px solid #828790; border-width: 2px 1px 1px 1px; background: #fff; overflow: hidden; }
.hbox { height: 202px; display: flex; flex-direction: column; }
.colhead { height: 22px; flex: none; background: linear-gradient(#fff 40%, #f1f2f4); border-bottom: 1px solid #dcdfe3; padding: 3px 0 0 4px; }
.tree { position: relative; padding-top: 1px; flex: 1; }
.lines { position: absolute; left: 0; top: 0; }
.lines path { fill: none; stroke: #a0a0a0; stroke-dasharray: 1 1; }
.row { height: 16px; display: flex; align-items: center; padding-left: 6px; position: relative; }
.row.deep { padding-left: 26px; }
.exp { width: 9px; height: 9px; margin-right: 8px; border: 1px solid #919191; border-radius: 1px; background: linear-gradient(#1c3c98, #1c3c98) center / 5px 1px no-repeat, #fff; }
.exp.plus { background: linear-gradient(#1c3c98, #1c3c98) center / 5px 1px no-repeat, linear-gradient(#1c3c98, #1c3c98) center / 1px 5px no-repeat, #fff; }
.exp.none { visibility: hidden; }
.fill { flex: 1; min-width: 0; height: 16px; display: flex; overflow: hidden; }
.fill.hl { background: #f0f0f0; }
.icons { width: 38px; flex: none; display: flex; }
.icons.slim { width: 22px; }
.hscroll { height: 15px; flex: none; display: flex; align-items: center; background: #ececec; padding: 0 5px; position: relative; }
.hscroll .ar { margin-left: auto; }
.al, .ar { width: 0; height: 0; border: 3.5px solid transparent; flex: none; }
.al { border-right: 4px solid #222; border-left: 0; }
.ar { border-left: 4px solid #222; border-right: 0; }
.thumb { height: 15px; border: 1px solid #8e8e8e; border-radius: 2px; background: repeating-linear-gradient(to right, #555 0 1px, transparent 1px 3px) center / 8px 6px no-repeat, linear-gradient(#f6f6f6 45%, #d6d6d8 50%, #cfcfd0); }
.thumb.blue { width: 186px; margin-left: 9px; border-color: #3c7fb1; background: repeating-linear-gradient(to right, #1c4c78 0 1px, transparent 1px 3px) center / 8px 6px no-repeat, linear-gradient(#e3f4fc 45%, #a9dbf5 50%, #b0e0fa); }
.hbox .hscroll { height: 16px; margin-bottom: 1px; }
.splith { height: 5px; flex: none; display: flex; justify-content: center; align-items: center; }
.splith i { width: 88px; height: 2px; background: repeating-linear-gradient(to right, #c0c0c0 0 2px, transparent 2px 4px); margin-right: 6px; }
.running { height: 28px; flex: none; display: flex; align-items: center; gap: 8px; padding: 0 0 1px 6px; }
.pbox { flex: 1; display: flex; min-height: 0; }
.plist { flex: 1; min-width: 0; display: flex; flex-direction: column; }
.vscroll { width: 16px; flex: none; background: #ececec; display: flex; flex-direction: column; align-items: center; padding: 6px 0; }
.au, .ad { width: 0; height: 0; border: 3.5px solid transparent; flex: none; }
.au { border-bottom: 4px solid #444; border-top: 0; }
.ad { border-top: 4px solid #444; border-bottom: 0; margin-top: auto; }
.vthumb { width: 14px; height: 80px; margin-top: 82px; border: 1px solid #8e8e8e; border-radius: 2px; background: repeating-linear-gradient(#555 0 1px, transparent 1px 3px) center / 7px 9px no-repeat, linear-gradient(to right, #f6f6f6 45%, #d6d6d8 50%, #cfcfd0); }
.sidetabs { flex: 1; display: flex; padding: 0 0 0 2px; align-items: flex-start; }
.st { height: 22px; border: 1px solid #8e8e8e; border-top-color: #a0a0a0; background: linear-gradient(#d0d0d0, #ececec); display: flex; align-items: center; padding-bottom: 2px; }
.st.t1 { width: 62px; padding-left: 3px; gap: 8px; border-right: 0; }
.st.t2 { width: 78px; height: 24px; background: #fff; padding-left: 7px; gap: 10px; border-top-color: #fff; }
.st.t3 { width: 62px; padding-left: 4px; gap: 10px; border-left: 0; }
.st.t4 { width: 72px; padding-left: 5px; gap: 6px; border-left: 0; }
.splitv { width: 5px; flex: none; padding: 163px 0 0 1px; border-right: 1px solid #fff; }
.splitv i { display: block; width: 3px; height: 157px; background: repeating-linear-gradient(#c4c4c4 0 2px, transparent 2px 4px); }
.center { flex: 1; min-width: 0; display: flex; flex-direction: column; }
.editor { height: 469px; flex: none; display: flex; }
.rtool { width: 27px; flex: none; display: flex; flex-direction: column; padding: 1px 1px 0 0; border-right: 2px solid #8c8e94; }
.rtool .vslot { height: 22.2px; width: 24px; flex: none; }
.rtool .hsep { height: 5.6px; }
.rtool .vslot.pressed { border: 1px solid #6a6a6a; border-radius: 3px; background: #d8d8d8; height: 21px; margin: 1px 0 .2px; }
.canvas { background: #000; font: 20px "Liberation Sans", Arial, sans-serif; }
.big { font-size: 46.2px; }
.doctabs { height: 25px; display: flex; align-items: flex-start; border-top: 1px solid #9a9a9a; }
.dt { width: 185px; height: 21px; flex: none; border: 1px solid #999; border-width: 0 1px 1px 0; background: linear-gradient(#cfcfcf, #e8e8e8); display: flex; align-items: center; padding-left: 6px; }
.dt span { margin-left: 10px; }
.dt.first { width: 126px; padding-left: 0; }
.dt.first span { margin-left: 0; }
.dt.on { background: #f4f7fa; border: 0; border-bottom: 3px solid #3390ee; height: 22px; width: 183px; margin-left: 1px; padding: 1px 0 0 5px; }
.x { width: 14px; height: 14px; margin-left: 12px; border-radius: 2px; background: #b8b8b8; border: 1px solid #a4a4a4; position: relative; }
.dt.on .x { background: #e2604c; border-color: #b84434; }
.x::before, .x::after { content: ""; position: absolute; left: 2px; top: 5px; width: 8px; height: 2px; background: #fff; transform: rotate(45deg); }
.x::after { transform: rotate(-45deg); }
.tb { width: 14px; height: 20px; margin: 1px 0 0 2px; border: 1px solid #888; border-radius: 2px; display: flex; align-items: center; justify-content: center; background: linear-gradient(#fafafa, #ddd); flex: none; }
.tb .al { border-width: 4.500px; border-right-width: 5px; border-left: 0; border-right-color: #000; }
.tb.off { border-color: #c4c4c4; }
.tb.off .ar { border-width: 4.500px; border-left: 5px solid #aaa; border-right: 0; }
.splitb { height: 5px; flex: none; padding: 0 0 0 455px; }
.splitb i { display: block; width: 453px; height: 3px; background: repeating-linear-gradient(to right, #cacaca 0 2px, transparent 2px 4px); }
.bottom { height: 136px; flex: none; display: flex; }
.warn { width: 1102px; flex: none; }
.wbox { height: 116px; margin-top: 2px; border: 1px solid #828790; background: #fff; display: flex; flex-direction: column; }
.wrow { flex: 1; display: flex; justify-content: space-between; }
.strip { width: 19px; background: #f0f0f0; margin: 1px 0 0 2px; }
.wv { background: #f1f1f1; }
.wv .au { border-bottom-color: #999; } .wv .ad { border-top-color: #999; }
.wbox .hscroll { height: 17px; padding: 0 22px 1px 6px; }
.wbox .thumb { width: 93px; margin-left: 8px; }
.warn .dock { margin-right: 0; }
.cat { flex: 1; padding-left: 4px; display: flex; flex-direction: column; }
.cat .dockhead { border-right: 0; padding-left: 3px; }
.cat .dock { margin-right: 0; }
.lists { display: flex; padding-top: 22px; height: 94px; }
.lb { width: 36px; height: 68px; margin-right: 6px; border: 1px solid #828790; background: #fff; flex: none; overflow: hidden; display: flex; flex-direction: column; }
.vdots { width: 3px; height: 43px; margin: 3px 4px 0 -3px; background: repeating-linear-gradient(#c4c4c4 0 2px, transparent 2px 5px); }
.vdots.d2 { height: 27px; margin: 11px 6px 0 -2px; }
.lb.wide { width: 119px; margin: 0; }
.lh { height: 23px; flex: none; border-bottom: 1px solid #d8dbe0; background: linear-gradient(#fff 40%, #f1f2f4); padding: 3px 0 0 4px; display: flex; }
.lb:not(.wide) .lh { padding-left: 3px; }
.lbody { flex: 1; overflow: hidden; display: flex; padding: 1px 0 0 23px; position: relative; }
.branch::before { content: ""; position: absolute; left: 10px; top: 1px; width: 10px; height: 8px; border: dotted #999; border-width: 0 0 1px 1px; }
.sort { border: 5px solid transparent; border-top-color: #9a9a9a; height: 0; margin: 3px 9px 0 2px; }
.vline { width: 1px; height: 18px; background: #ddd; margin-right: 4px; }
.lb .hscroll { padding: 0 6px; }
.wide .thumb { width: 59px; margin-left: 8px; }
.cattabs { display: flex; margin-left: 2px; align-items: flex-start; }
.ct { height: 21px; width: 130px; display: flex; align-items: center; border: 1px solid #9a9a9a; background: linear-gradient(#cbcbcb, #ebebeb); padding: 0 0 2px 4px; gap: 8px; margin-top: 1px; }
.ct.on { background: #fff; width: 127px; height: 24px; margin-top: 0; border: 0; border-left: 1px solid #888; padding: 0 0 0 8px; gap: 8px; }
.status { height: 21px; flex: none; display: flex; justify-content: flex-end; padding: 2px 3px 0 0; }
.taskbar { height: 37px; flex: none; position: relative; display: flex; border-top: 1px solid #12395e; box-shadow: inset 0 1px #90c0e0; background: linear-gradient(to right, #1d5f98 0, #2b86be 90px, #3195d2 180px, #3c9ad4 500px, #3490cf 700px, #2a80c6 900px, #1f62a8 1080px, #1c5cA4 1180px, #143f72 1230px, #123a68 1365px); }
.glow { position: absolute; left: 0; top: 0; }
.launch, .task { position: relative; flex: none; display: flex; justify-content: center; padding-top: 1px; overflow: hidden; }
.launch { align-items: flex-start; }
.l1 { width: 54px; } .l2 { width: 70px; padding-top: 3px; } .l3 { width: 60px; padding: 8px 7px 0 0; }
.task { width: 58px; margin-right: 4px; padding-top: 4px; border: 1px solid #1d527e; border-bottom: 0; border-radius: 2px 2px 0 0; box-shadow: inset 1px 1px #cfe8f6; background: linear-gradient(105deg, #9fcfea, #6fb4de 50%, #5aa8da); }
.isim2 { font: bold 8px "Liberation Sans", sans-serif; }
.tray { margin-left: auto; display: flex; align-items: center; gap: 13px; position: relative; padding-top: 4px; }
.trayup { border: 4px solid transparent; border-bottom-color: #fff; border-top: 0; }
.clock { width: 60px; position: relative; color: #fff; font-size: 12px; line-height: 17px; display: flex; flex-direction: column; align-items: center; padding: 3px 0 0 2px; }
.peek { width: 13px; margin-left: 7px; border-left: 1px solid #0a2444; background: linear-gradient(#8faac8, #2c5484 60%, #4a6c94); position: relative; }
</style>
